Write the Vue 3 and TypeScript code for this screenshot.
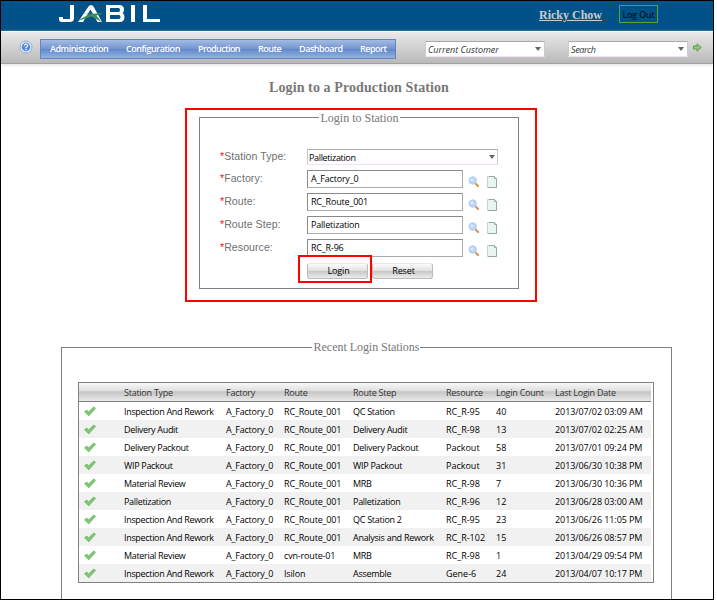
<script setup lang="ts">
interface Station {
  type: string
  factory: string
  route: string
  step: string
  resource: string
  count: number
  date: string
}

const menu = ['Administration', 'Configuration', 'Production', 'Route', 'Dashboard', 'Report']

const fields = [
  { label: 'Factory:', value: 'A_Factory_0' },
  { label: 'Route:', value: 'RC_Route_001' },
  { label: 'Route Step:', value: 'Palletization' },
  { label: 'Resource:', value: 'RC_R-96' },
]

const columns = ['', 'Station Type', 'Factory', 'Route', 'Route Step', 'Resource', 'Login Count', 'Last Login Date']

const row = (
  type: string, route: string, step: string, resource: string, count: number, date: string,
): Station => ({ type, factory: 'A_Factory_0', route, step, resource, count, date })

const stations: Station[] = [
  row('Inspection And Rework', 'RC_Route_001', 'QC Station', 'RC_R-95', 40, '2013/07/02 03:09 AM'),
  row('Delivery Audit', 'RC_Route_001', 'Delivery Audit', 'RC_R-98', 13, '2013/07/02 02:25 AM'),
  row('Delivery Packout', 'RC_Route_001', 'Delivery Packout', 'Packout', 58, '2013/07/01 09:24 PM'),
  row('WIP Packout', 'RC_Route_001', 'WIP Packout', 'Packout', 31, '2013/06/30 10:38 PM'),
  row('Material Review', 'RC_Route_001', 'MRB', 'RC_R-98', 7, '2013/06/30 10:36 PM'),
  row('Palletization', 'RC_Route_001', 'Palletization', 'RC_R-96', 12, '2013/06/28 03:00 AM'),
  row('Inspection And Rework', 'RC_Route_001', 'QC Station 2', 'RC_R-95', 23, '2013/06/26 11:05 PM'),
  row('Inspection And Rework', 'RC_Route_001', 'Analysis and Rework', 'RC_R-102', 15, '2013/06/26 08:57 PM'),
  row('Material Review', 'cvn-route-01', 'MRB', 'RC_R-98', 1, '2013/04/29 09:54 PM'),
  row('Inspection And Rework', 'Isilon', 'Assemble', 'Gene-6', 24, '2013/04/07 10:17 PM'),
]
</script>

<template>
  <div class="frame">
    <header class="banner">
      <svg class="logo" width="102" height="18" viewBox="0 0 102 18" aria-label="Jabil">
        <g fill="#fff">
          <path d="M11 0H15V13Q15 17 11 17H3Q0 17 0 14V12H4V14H11Z" />
          <path d="M19 17L29.500 1.500Q30.500 0 32 0Q33.500 0 34.500 1.500L43 17H38.500L31.500 4.500L24 17Z" />
          <path fill-rule="evenodd" d="M47 0H60Q65 0 65 4.500Q65 7 63.500 8Q65.500 9.200 65.500 12Q65.500 17 60.500 17H47ZM51 3V7H59.500Q61 7 61 5Q61 3 59.500 3ZM51 10V14H60Q61.500 14 61.500 12Q61.500 10 60 10Z" />
          <path d="M72 0H76V17H72Z" />
          <path d="M84 0H88V14H101V17H84Z" />
        </g>
        <path d="M24 8.500Q35 9.500 45 7.500L37.500 10.500L42.500 17L32.500 11.500L19 16Q25 11 31 9.800Z" fill="#3c8f5c" />
      </svg>
      <a class="user">Ricky Chow</a>
      <button class="logout">Log Out</button>
    </header>

    <nav class="toolbar">
      <svg class="help" width="14" height="14" viewBox="0 0 14 14">
        <circle cx="7" cy="7" r="6" fill="#eef5ff" stroke="#8da9d2" />
        <circle cx="7" cy="7" r="4.400" fill="#5a8bd0" />
        <path d="M5.400 5.600Q5.600 4.200 7 4.200Q8.700 4.200 8.600 5.700Q8.500 6.600 7 7.500V8.200M7 9.100V10.300" fill="none" stroke="#fff" stroke-width="1.200" />
      </svg>
      <div class="menu">
        <span v-for="(m, i) in menu" :key="m" :class="'m' + i">{{ m }}</span>
      </div>
      <div class="combo customer"><span>Current Customer</span><i class="caret" /></div>
      <div class="combo search"><span>Search</span><i class="caret" /></div>
      <svg class="go" width="9" height="9" viewBox="0 0 9 9">
        <path d="M.5 3H4V.8L8.300 4.500L4 8.200V6H.5Z" fill="#8fc975" stroke="#5fa04c" />
      </svg>
    </nav>

    <main>
      <h1>Login to a Production Station</h1>

      <div class="marked">
        <section class="group login">
          <h2><span>Login to Station</span></h2>
          <div class="field first">
            <label><b>*</b>Station Type:</label>
            <div class="combo type"><span>Palletization</span><i class="caret" /></div>
          </div>
          <div v-for="f in fields" :key="f.label" class="field">
            <label><b>*</b>{{ f.label }}</label>
            <div class="box">{{ f.value }}</div>
            <svg class="find" width="12" height="12" viewBox="0 0 12 12">
              <path d="M7.500 7.500L10 10" stroke="#d39a5c" stroke-width="2.300" stroke-linecap="round" />
              <circle cx="4.700" cy="4.500" r="3.700" fill="#b8d5f7" stroke="#b4caf0" />
              <circle cx="4" cy="3.800" r="1.600" fill="#dcecff" />
            </svg>
            <svg class="doc" width="10" height="12" viewBox="0 0 10 12">
              <path d="M.5 .5H7.500L9.500 2.500V11.500H.5Z" fill="#eaf5f2" stroke="#c3d2cf" />
              <path d="M2 .5H7.500V2.500H9.500V11.500H1" fill="none" stroke="#93aaa6" />
            </svg>
          </div>
          <div class="actions">
            <span class="hot"><button>Login</button></span>
            <button>Reset</button>
          </div>
        </section>
      </div>

      <section class="group recent">
        <h2><span>Recent Login Stations</span></h2>
        <div class="table">
          <div class="tr head">
            <span v-for="c in columns" :key="c">{{ c }}</span>
          </div>
          <div v-for="(s, i) in stations" :key="i" class="tr">
            <svg width="12" height="11" viewBox="0 0 12 11">
              <path d="M.7 5.800L2.700 4L4.600 6L9.800 1L11.400 2.300L4.800 9.800Z" fill="#7ccb72" stroke="#5fae5c" stroke-width=".8" stroke-linejoin="round" />
            </svg>
            <span class="type-cell">{{ s.type }}</span>
            <span class="factory-cell">{{ s.factory }}</span>
            <span class="route-cell">{{ s.route }}</span>
            <span class="step-cell">{{ s.step }}</span>
            <span>{{ s.resource }}</span>
            <span>{{ s.count }}</span>
            <span class="date-cell">{{ s.date }}</span>
          </div>
        </div>
      </section>
    </main>
  </div>
</template>

<style>
body { background: #fff; }
</style>

<style scoped>
* { box-sizing: border-box; }
.frame {
  width: 714px; height: 600px; overflow: hidden;
  border: 1px solid #000; background: #fff;
  font: 9px/12px "Open Sans", "Noto Sans", sans-serif; color: #000;
}
.banner {
  height: 30px; background: #005288; display: flex; align-items: flex-start;
}
.logo { margin: 4px 0 0 58px; }
.user {
  margin: 7px 0 0 378px; width: 64px; white-space: nowrap;
  font: bold 12px/15px "Liberation Serif", serif; color: #ccc; text-decoration: underline;
}
.logout {
  margin: 4px 0 0 16px; width: 39px; height: 18px; padding: 1px 0 0;
  border: 1px solid #55a532; background: transparent; color: #000;
  font: 9px/14px "Open Sans", sans-serif; white-space: nowrap; letter-spacing: -.15px;
}
.toolbar {
  height: 33px; display: flex; align-items: flex-start;
  border-top: 1px solid #fff; border-bottom: 1px solid #a0a0a0;
  background: linear-gradient(#e9e9e9, #b9b9b9);
  box-shadow: 0 1px 3px #ddd;
}
.help { margin: 8px 0 0 18px; }
.menu {
  margin: 7px 0 0 7px; width: 356px; height: 20px; padding-left: 9px;
  display: flex; border: 1px solid #6185c3;
  background: linear-gradient(#a3bce3, #7495cf 48%, #6288c8 52%, #94b3e2);
  color: #fff; font-weight: 600; line-height: 18px; white-space: nowrap; letter-spacing: -.45px;
}
.m0 { width: 76px; }
.m1 { width: 72px; }
.m2 { width: 60px; letter-spacing: -.6px; }
.m3 { width: 41px; }
.m4 { width: 61px; }
.m0, .m3, .m5 { letter-spacing: -.5px; }
.combo {
  display: flex; justify-content: space-between; align-items: center;
  height: 16px; padding: 0 3px 0 2px; background: #fff;
  border-top: 1px solid #aaa; border-left: 1px solid #ccc;
  border-bottom: 1px solid #f2e2f8; border-right: 1px solid #ccc;
  white-space: nowrap;
}
.combo span { padding-top: 1px; }
.customer { margin: 9px 0 0 29px; width: 120px; }
.search { margin: 9px 0 0 23px; width: 120px; }
.customer span, .search span { font-style: italic; color: #333; }
.search span { letter-spacing: -.4px; }
.caret {
  width: 0; height: 0; border: 3.5px solid transparent; border-top: 4px solid #666; border-bottom: 0;
}
.go { margin: 11px 0 0 5px; }
h1 {
  margin: 15px 0 0; padding-left: 268px; white-space: nowrap; letter-spacing: .1px;
  font: bold 14px/18px "Liberation Serif", serif; color: #777;
}
.marked {
  margin: 11px 0 0 184px; width: 352px; height: 194px;
  border: 2px solid #f00; padding: 7px 0 0 12px;
}
.group { border: 1px solid #808080; }
.group h2 {
  margin: -8px 0 0; height: 15px; text-align: center;
  font: 12px/15px "Liberation Serif", serif; color: #777;
}
.group h2 span { display: inline-block; background: #fff; padding: 1px 1px 0 2px; white-space: nowrap; }
.login { width: 320px; height: 172px; }
.field { display: flex; height: 23px; padding-left: 20px; }
.field label {
  width: 87px; white-space: nowrap; padding-top: 1px; letter-spacing: .04px;
  font: 10.6px/15px "Liberation Sans", sans-serif; color: #707070;
}
.field label b { color: #f00; font-weight: normal; }
.field.first { margin-top: 24px; height: 21px; }
.first label { padding-top: 0; }
.type { width: 191px; padding: 0 2px 0 1px; }
.type span { letter-spacing: -.35px; }
.box {
  width: 156px; height: 18px; line-height: 16px; padding-left: 3px;
  border: 1px solid #8a8a8a; border-right-color: #aaa; border-bottom-color: #aaa;
  white-space: nowrap; letter-spacing: -.19px;
}
.find { margin: 6px 0 0 5px; }
.doc { margin: 6px 0 0 7px; }
.actions { display: flex; padding-left: 98px; margin-top: -7px; }
.hot { width: 74px; height: 28px; border: 2px solid #f00; padding: 6px 0 0 7px; }
button { font: 9px/12px "Open Sans", "Noto Sans", sans-serif; }
.actions button {
  display: block; width: 61px; height: 16px; padding: 0 0 0 2px; color: #000;
  border: 1px solid #bbb; border-top-color: #e8e8e8; border-radius: 3px;
  background: linear-gradient(#fdfdfd, #e0e0e0 48%, #c6c6c6 50%, #ececec);
  letter-spacing: -.15px;
}
.actions > button { margin: 8px 0 0; }
.recent { margin: 45px 0 0 60px; width: 611px; height: 270px; padding-left: 16px; }
.table {
  margin-top: 27px; width: 576px; height: 201px; border: 1px solid #808080; padding-right: 2px;
}
.recent h2 { margin-left: -17px; letter-spacing: -.04px; }
.recent h2 span { padding-top: 0; }
.tr {
  display: grid; grid-template-columns: 45px 102px 58px 69px 93px 50px 59px 1fr;
  height: 18px; line-height: 17px; align-items: center; white-space: nowrap;
}
.tr span { padding-top: 1px; }
.tr svg { margin-left: 5px; }
.tr:nth-child(odd) { background: #f1f1f1; }
.type-cell { letter-spacing: -.32px; }
.factory-cell { letter-spacing: -.2px; }
.route-cell { letter-spacing: -.17px; }
.step-cell { letter-spacing: -.28px; }
.date-cell { letter-spacing: -.08px; }
.tr.head {
  height: 19px; border-bottom: 1px solid #808080; color: #333; letter-spacing: -.25px;
  background: linear-gradient(#f8f8f8, #dedede 45%, #c5c5c5 48%, #e9e9e9);
}
</style>
